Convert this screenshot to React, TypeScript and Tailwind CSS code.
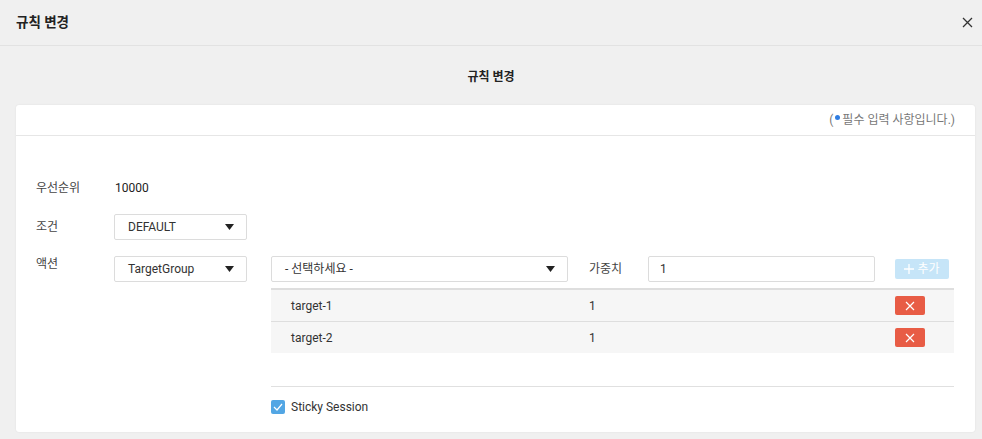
import { useState } from "react";

const font = { fontFamily: "Roboto, 'Noto Sans CJK KR', sans-serif" };

type Target = { name: string; weight: number };

function Caret() {
  return (
    <svg width="9" height="6" viewBox="0 0 9 6" className="shrink-0">
      <path d="M0 0h9L4.5 6z" fill="#222" />
    </svg>
  );
}

function SelectBox({ value, className }: { value: string; className: string }) {
  return (
    <div
      className={`h-[26px] flex items-center justify-between pl-[13px] pr-[12px] bg-white border border-[#dcdcdc] rounded-[2px] text-[12px] text-[#333] ${className}`}
    >
      <span>{value}</span>
      <Caret />
    </div>
  );
}

export default function App() {
  const [sticky, setSticky] = useState(true);
  const targets: Target[] = [
    { name: "target-1", weight: 1 },
    { name: "target-2", weight: 1 },
  ];

  return (
    <div className="w-[982px] h-[439px] bg-[#f0f0f0] overflow-hidden" style={font}>
      {/* modal header */}
      <div className="h-[46px] flex items-center justify-between pl-[16px] pr-[9px] border-b border-[#e2e2e2]">
        <h1 className="text-[13.5px] font-bold text-[#222]">규칙 변경</h1>
        <button className="text-[#333]">
          <svg width="11" height="11" viewBox="0 0 11 11">
            <path d="M1 1l9 9M10 1l-9 9" stroke="#333" strokeWidth="1.3" />
          </svg>
        </button>
      </div>

      <div className="pt-[22px] text-center text-[12px] leading-[18px] font-bold text-[#222]">규칙 변경</div>

      {/* card */}
      <div className="mt-[19px] ml-[16px] w-[959px] h-[327px] bg-white rounded-[3px] shadow-[0_0_2px_rgba(0,0,0,0.08)]">
        <div className="h-[31px] flex items-center justify-end pr-[20px] border-b border-[#e6e6e6] text-[12px] text-[#777]">
          (<span className="inline-block w-[5px] h-[5px] rounded-full bg-[#2f7de1] mx-[2px] -translate-y-[3px]" />필수 입력 사항입니다.)
        </div>

        <div className="pl-[20px] pr-[20px] pt-[42px]">
          {/* priority */}
          <div className="flex items-center h-[20px] text-[12px]">
            <span className="w-[79px] text-[#444]">우선순위</span>
            <span className="text-[#222]">10000</span>
          </div>

          {/* condition */}
          <div className="flex items-center mt-[16px] text-[12px]">
            <span className="w-[78px] text-[#444]">조건</span>
            <SelectBox value="DEFAULT" className="w-[133px]" />
          </div>

          {/* action */}
          <div className="flex mt-[16px] text-[12px]">
            <span className="w-[78px] text-[#444] leading-[16px]">액션</span>
            <SelectBox value="TargetGroup" className="w-[133px]" />
            <div className="ml-[24px] w-[683px]">
              <div className="flex items-center pb-[6px] border-b border-[#dedede]">
                <SelectBox value="- 선택하세요 -" className="w-[297px]" />
                <span className="ml-[21px] w-[59px] text-[#444]">가중치</span>
                <div className="w-[227px] h-[26px] flex items-center px-[11px] border border-[#dcdcdc] rounded-[2px] text-[#333]">
                  1
                </div>
                <button className="ml-[20px] w-[54px] h-[20px] flex items-center justify-center gap-[3px] bg-[#c6e5f8] rounded-[2px] text-white text-[12px]">
                  <svg width="10" height="10" viewBox="0 0 10 10">
                    <path d="M5 0v10M0 5h10" stroke="#fff" strokeWidth="1.3" />
                  </svg>
                  추가
                </button>
              </div>
              {targets.map((t) => (
                <div key={t.name} className="flex items-center h-[32px] bg-[#f6f6f6] border-t border-[#dedede] first:border-t-0">
                  <span className="pl-[20px] w-[318px] text-[#333]">{t.name}</span>
                  <span className="w-[306px] text-[#333]">{t.weight}</span>
                  <button className="w-[30px] h-[19px] flex items-center justify-center bg-[#e85c45] rounded-[2px]">
                    <svg width="10" height="10" viewBox="0 0 10 10">
                      <path d="M1 1l8 8M9 1l-8 8" stroke="#fff" strokeWidth="1.2" />
                    </svg>
                  </button>
                </div>
              ))}
              <div className="mt-[33px] border-t border-[#e0e0e0] pt-[11px] flex items-center gap-[6px]">
                <button
                  onClick={() => setSticky(!sticky)}
                  className="w-[14px] h-[14px] rounded-[2px] bg-[#52a6e4] flex items-center justify-center"
                >
                  {sticky && (
                    <svg width="10" height="8" viewBox="0 0 10 8">
                      <path d="M1 4l3 3 5-6" stroke="#fff" strokeWidth="1.2" fill="none" />
                    </svg>
                  )}
                </button>
                <span className="text-[12px] text-[#333]">Sticky Session</span>
              </div>
            </div>
          </div>
        </div>
      </div>
    </div>
  );
}
